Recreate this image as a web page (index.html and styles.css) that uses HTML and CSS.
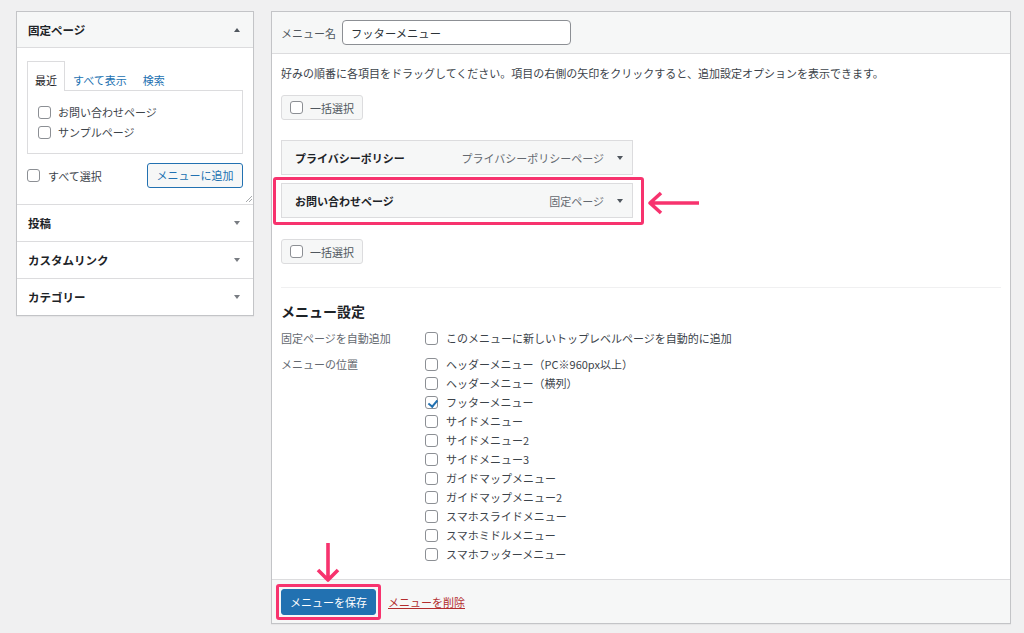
FILE: index.html
```html
<!DOCTYPE html>
<html lang="ja">
<head>
<meta charset="utf-8">
<title>メニュー</title>
<link rel="stylesheet" href="styles.css">
</head>
<body>
<div class="page">
  <aside class="side">
    <section class="acc open">
      <h3 class="acc-title">固定ページ<span class="tri up"></span></h3>
      <div class="acc-body">
        <ul class="tabs">
          <li class="tab active">最近</li>
          <li class="tab link">すべて表示</li>
          <li class="tab link">検索</li>
        </ul>
        <div class="tab-panel">
          <label class="chk"><input type="checkbox" class="cb">お問い合わせページ</label>
          <label class="chk"><input type="checkbox" class="cb">サンプルページ</label>
        </div>
        <div class="acc-actions">
          <label class="chk wide"><input type="checkbox" class="cb">すべて選択</label>
          <button class="btn-secondary">メニューに追加</button>
        </div>
        <svg class="grip" width="7" height="7" viewBox="0 0 7 7"><path d="M1 7 L7 1 M4 7 L7 4" stroke="#a7aaad" stroke-width="1"/></svg>
      </div>
    </section>
    <section class="acc"><h3 class="acc-title">投稿<span class="tri"></span></h3></section>
    <section class="acc"><h3 class="acc-title">カスタムリンク<span class="tri"></span></h3></section>
    <section class="acc"><h3 class="acc-title">カテゴリー<span class="tri"></span></h3></section>
  </aside>

  <main class="menu">
    <header class="menu-head">
      <label class="name-label">メニュー名</label>
      <input class="name-input" type="text" value="フッターメニュー">
    </header>
    <div class="menu-body">
      <p class="hint">好みの順番に各項目をドラッグしてください。項目の右側の矢印をクリックすると、追加設定オプションを表示できます。</p>
      <label class="bulk"><input type="checkbox" class="cb">一括選択</label>
      <div class="items">
        <div class="item">
          <span class="item-title">プライバシーポリシー</span>
          <span class="item-meta">プライバシーポリシーページ</span>
          <span class="tri dark"></span>
        </div>
        <div class="item highlighted">
          <span class="item-title">お問い合わせページ</span>
          <span class="item-meta">固定ページ</span>
          <span class="tri dark"></span>
          <svg class="arrow-left" width="54" height="26" viewBox="0 0 54 26"><path d="M3 13 H52 M14 3 L3 13 L14 23" fill="none" stroke="#f7336e" stroke-width="3.6" stroke-linejoin="round"/></svg>
        </div>
      </div>
      <label class="bulk second"><input type="checkbox" class="cb">一括選択</label>
      <hr class="divider">
      <h3 class="settings-title">メニュー設定</h3>
      <div class="set-row">
        <div class="set-label">固定ページを自動追加</div>
        <label class="chk opt"><input type="checkbox" class="cb">このメニューに新しいトップレベルページを自動的に追加</label>
      </div>
      <div class="set-row">
        <div class="set-label">メニューの位置</div>
        <ul class="opts">
          <li><label class="chk opt"><input type="checkbox" class="cb">ヘッダーメニュー（PC※960px以上）</label></li>
          <li><label class="chk opt"><input type="checkbox" class="cb">ヘッダーメニュー（横列）</label></li>
          <li><label class="chk opt"><input type="checkbox" class="cb" checked>フッターメニュー</label></li>
          <li><label class="chk opt"><input type="checkbox" class="cb">サイドメニュー</label></li>
          <li><label class="chk opt"><input type="checkbox" class="cb">サイドメニュー2</label></li>
          <li><label class="chk opt"><input type="checkbox" class="cb">サイドメニュー3</label></li>
          <li><label class="chk opt"><input type="checkbox" class="cb">ガイドマップメニュー</label></li>
          <li><label class="chk opt"><input type="checkbox" class="cb">ガイドマップメニュー2</label></li>
          <li><label class="chk opt"><input type="checkbox" class="cb">スマホスライドメニュー</label></li>
          <li><label class="chk opt"><input type="checkbox" class="cb">スマホミドルメニュー</label></li>
          <li><label class="chk opt"><input type="checkbox" class="cb">スマホフッターメニュー</label></li>
        </ul>
      </div>
    </div>
    <footer class="menu-foot">
      <span class="save-wrap">
        <svg class="arrow-down" width="26" height="42" viewBox="0 0 26 42"><path d="M13 2 V39 M3 29 L13 39 L23 29" fill="none" stroke="#f7336e" stroke-width="3.6" stroke-linejoin="round"/></svg>
        <button class="btn-primary">メニューを保存</button>
      </span>
      <a class="delete-link">メニューを削除</a>
    </footer>
  </main>
</div>
</body>
</html>
```

FILE: styles.css
```css
* { box-sizing: border-box; }
html, body { margin: 0; padding: 0; }
body {
  background: #f0f0f1;
  font-family: "Noto Sans CJK JP", "Noto Sans", "Liberation Sans", sans-serif;
  font-size: 11px;
  color: #3c434a;
  width: 1024px;
  height: 633px;
  overflow: hidden;
}
.page {
  display: flex;
  align-items: flex-start;
  gap: 17px;
  padding: 11px 0 0 16px;
}

/* ---------- left accordion ---------- */
.side {
  width: 238px;
  background: #fff;
  border: 1px solid #c3c4c7;
  box-shadow: 0 1px 1px rgba(0,0,0,.04);
}
.acc { border-bottom: 1px solid #dcdcde; }
.acc:last-child { border-bottom: 0; }
.acc-title {
  margin: 0;
  height: 36px;
  display: flex;
  align-items: center;
  justify-content: space-between;
  padding: 0 13px 0 11px;
  font-size: 11.5px;
  font-weight: 700;
  line-height: 16px;
  color: #1d2327;
}
.acc.open .acc-title {
  background: #f6f7f7;
  border-bottom: 1px solid #dcdcde;
}
.tri {
  width: 0; height: 0;
  border-left: 3.5px solid transparent;
  border-right: 3.5px solid transparent;
  border-top: 4.5px solid #787c82;
}
.tri.up {
  border-top: 0;
  border-bottom: 4.5px solid #50575e;
}
.tri.dark { border-top-color: #50575e; margin-left: 13px; }

.acc-body {
  position: relative;
  padding: 13px 10px 16px;
}
.tabs {
  display: flex;
  align-items: flex-start;
  list-style: none;
  margin: 0;
  padding: 0;
  height: 29px;
}
.tab {
  padding: 10px 7px 2px;
  line-height: 16px;
  border: 1px solid transparent;
  border-bottom: 0;
  height: 29px;
}
.tab.link { color: #2271b1; }
.tab.active {
  position: relative;
  z-index: 1;
  height: 30px;
  background: #fff;
  border-color: #dcdcde;
  color: #1d2327;
}
.tab-panel {
  border: 1px solid #dcdcde;
  height: 64px;
  padding: 11px 10px 10px;
}
.chk {
  display: flex;
  align-items: center;
  gap: 7px;
  line-height: 20px;
  color: #3c434a;
}
.chk.wide { gap: 8px; }
.cb {
  appearance: none;
  -webkit-appearance: none;
  width: 13px;
  height: 13px;
  margin: 0;
  flex: none;
  border: 1px solid #8c8f94;
  border-radius: 3px;
  background: #fff;
  position: relative;
}
.cb:checked::before {
  content: "";
  position: absolute;
  left: 3.5px;
  top: 0.5px;
  width: 3.5px;
  height: 7px;
  border-right: 2px solid #2271b1;
  border-bottom: 2px solid #2271b1;
  transform: rotate(40deg);
}
.acc-actions {
  display: flex;
  justify-content: space-between;
  align-items: center;
  margin-top: 9px;
}
.btn-secondary {
  height: 25px;
  padding: 0 8.5px;
  font: inherit;
  line-height: 23px;
  color: #2271b1;
  background: #f6f7f7;
  border: 1px solid #2271b1;
  border-radius: 3px;
}
.grip {
  position: absolute;
  right: 1px;
  bottom: 2px;
}

/* ---------- right menu editor ---------- */
.menu {
  width: 740px;
  background: #fff;
  border: 1px solid #c3c4c7;
  box-shadow: 0 1px 1px rgba(0,0,0,.04);
}
.menu-head {
  height: 42px;
  display: flex;
  align-items: center;
  gap: 6px;
  padding: 0 9px;
  background: #f6f7f7;
  border-bottom: 1px solid #dcdcde;
}
.name-label { color: #50575e; line-height: 16px; }
.name-input {
  width: 229px;
  height: 25px;
  padding: 0 8px;
  font: inherit;
  font-size: 11.3px;
  color: #2c3338;
  background: #fff;
  border: 1px solid #8c8f94;
  border-radius: 4px;
}
.menu-body { padding: 11px 9px 15px; }
.hint { margin: 0; line-height: 16px; }
.bulk {
  display: inline-flex;
  align-items: center;
  gap: 7px;
  height: 25px;
  margin-top: 14px;
  padding: 0 8px;
  background: #f6f7f7;
  border: 1px solid #dcdcde;
  border-radius: 3px;
  color: #50575e;
  line-height: 16px;
}
.bulk.second { margin-top: 21px; }
.items {
  display: flex;
  flex-direction: column;
  gap: 8px;
  margin-top: 20px;
}
.item {
  position: relative;
  width: 352px;
  height: 35px;
  display: flex;
  align-items: center;
  padding: 0 9px 0 13px;
  background: #f6f7f7;
  border: 1px solid #dcdcde;
  line-height: 16px;
}
.item-title { flex: 1; font-weight: 700; color: #1d2327; }
.item-meta { color: #646970; }
.item.highlighted::after {
  content: "";
  position: absolute;
  left: -9px; right: -12px; top: -7px; bottom: -8px;
  border: 3px solid #f7336e;
  border-radius: 3px;
  pointer-events: none;
}
.arrow-left {
  position: absolute;
  left: calc(100% + 15px);
  top: 6px;
}
.divider {
  margin: 23px 0 0;
  border: 0;
  border-top: 1px solid #f0f0f1;
  height: 0;
}
.settings-title {
  margin: 13px 0 8px;
  font-size: 14px;
  font-weight: 700;
  line-height: 20px;
  color: #1d2327;
}
.set-row { display: flex; }
.set-row + .set-row { margin-top: 7px; }
.set-label {
  width: 144px;
  flex: none;
  color: #646970;
  line-height: 19px;
}
.chk.opt { line-height: 19px; gap: 8px; }
.opts { list-style: none; margin: 0; padding: 0; }

.menu-foot {
  height: 44px;
  display: flex;
  align-items: center;
  gap: 12px;
  padding: 0 9px;
  background: #f6f7f7;
  border-top: 1px solid #dcdcde;
}
.save-wrap { position: relative; display: inline-flex; }
.save-wrap::after {
  content: "";
  position: absolute;
  inset: -5px;
  border: 3px solid #f7336e;
  border-radius: 3px;
  pointer-events: none;
}
.btn-primary {
  height: 26px;
  padding: 0 8px;
  font: inherit;
  line-height: 24px;
  color: #fff;
  background: #2271b1;
  border: 1px solid #2271b1;
  border-radius: 3px;
}
.arrow-down {
  position: absolute;
  left: 34px;
  top: -48px;
}
.delete-link {
  color: #b32d2e;
  text-decoration: underline;
  line-height: 16px;
}
```
